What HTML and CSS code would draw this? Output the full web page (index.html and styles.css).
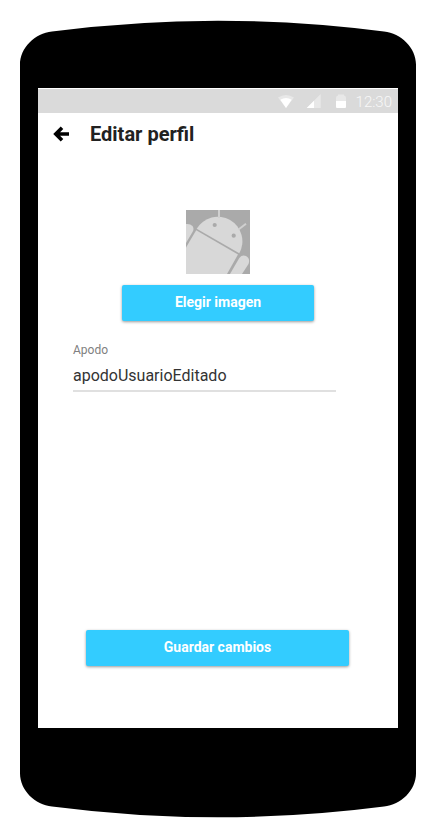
FILE: index.html
```html
<!DOCTYPE html>
<html lang="es">
<head>
<meta charset="utf-8">
<title>Editar perfil</title>
<link rel="stylesheet" href="styles.css">
</head>
<body>
<div class="phone">
  <svg class="phone-body" viewBox="0 0 396 798" aria-hidden="true">
    <path d="M0 44.500C0 28 15 13 32 11.500Q115 .7 198 .7T364 11.500C381 13 396 28 396 44.500V753.500C396 770 381 785 364 786.500Q281 797.300 198 797.300T32 786.500C15 785 0 770 0 753.500Z"/>
  </svg>
  <main class="screen">
    <div class="status-bar">
      <svg class="status-icons" viewBox="0 0 70 16" aria-hidden="true">
        <path fill="#e8e8e8" d="M0 3.500Q8 -1.500 16 3.500L8 14Z"/>
        <path fill="#fff" d="M2.300 5.800Q8 2 13.700 5.800L8 14Z"/>
        <path fill="#e8e8e8" d="M42.700 0V14H28.700Z"/>
        <path fill="#fff" d="M36 6.700V14H28.700Z"/>
        <path fill="#e8e8e8" d="M60 .500H66V1.500Q68 1.500 68 4V7H58V4Q58 1.500 60 1.500Z"/>
        <path fill="#fff" d="M58 7H68V13Q68 14 67 14H59Q58 14 58 13Z"/>
      </svg>
      <span class="clock">12:30</span>
    </div>
    <header class="app-bar">
      <svg class="back" viewBox="0 0 17 16" aria-hidden="true"><path d="M9 1.800 2.800 8 9 14.200M3 8H16"/></svg>
      <h1>Editar perfil</h1>
    </header>
    <svg class="avatar" viewBox="0 0 64 64" role="img">
      <path class="avatar-bg" d="M0 0H64V64H0Z"/>
      <path d="M10.700 18.700A24.600 24.600 0 0 1 53.300 43.300Z"/>
      <path d="M10.200 20.200 52 44.500 41 64H0V37.500Z"/>
      <path d="M0 14Q4 13.400 6.500 16Q8.500 19 6.500 22L0 33Z"/>
      <path d="M53.300 48Q56 44.500 60 46Q64.500 48.500 62.500 54L56 64H44Z"/>
      <path class="antenna" d="M33 0V8M52.500 19.500 60 13.800"/>
      <circle class="eye" cx="28.700" cy="15" r="2.100"/>
      <circle class="eye" cx="47.700" cy="25.700" r="2.100"/>
    </svg>
    <button class="button choose" type="button">Elegir imagen</button>
    <label class="field">
      <span class="field-label">Apodo</span>
      <input class="field-input" type="text" value="apodoUsuarioEditado">
    </label>
    <button class="button save" type="button">Guardar cambios</button>
  </main>
</div>
</body>
</html>
```
FILE: styles.css
```css
* {
  box-sizing: border-box;
}

body {
  margin: 0;
  padding: 20px;
  background: #fff;
  font-family: Roboto, sans-serif;
}

.phone {
  position: relative;
  width: 396px;
  height: 798px;
  padding: 68px 18px 90px;
}

.phone-body {
  position: absolute;
  inset: 0;
  width: 396px;
  height: 798px;
}

.screen {
  position: relative;
  display: flex;
  flex-direction: column;
  height: 640px;
  padding-top: 1px;
  background: #fff;
}

.status-bar {
  display: flex;
  justify-content: flex-end;
  height: 24px;
  padding-right: 6px;
  background: #dadada;
}

.status-icons {
  width: 70px;
  height: 16px;
  margin: 5px 8px 0 0;
}

.clock {
  color: #f8f8f8;
  font-size: 15px;
  font-weight: 300;
  line-height: 26px;
}

.app-bar {
  display: flex;
  align-items: center;
  gap: 20px;
  height: 42px;
  padding-left: 15px;
}

.back {
  width: 17px;
  height: 16px;
  fill: none;
  stroke: #000;
  stroke-width: 3.6;
}

h1 {
  margin: 0;
  color: #212121;
  font-size: 20px;
  font-weight: 700;
  line-height: 24px;
}

.avatar {
  align-self: center;
  width: 64px;
  height: 64px;
  margin-top: 55px;
  fill: #d8d8d8;
}

.avatar-bg,
.eye {
  fill: #aaa;
}

.antenna {
  fill: none;
  stroke: #d0d0d0;
  stroke-width: 2;
}

.button {
  height: 36px;
  padding: 0 0 2px;
  border: 0;
  border-radius: 2px;
  background: #3cf;
  box-shadow: 0 1px 3px rgba(0, 0, 0, .4);
  color: #fff;
  font: 700 14px/20px Roboto, sans-serif;
}

.choose {
  width: 192px;
  margin: 11px 0 0 84px;
}

.field {
  display: flex;
  flex-direction: column;
  width: 263px;
  margin: 21px 0 0 35px;
}

.field-label {
  color: #808080;
  font-size: 12px;
  line-height: 16px;
}

.field-input {
  height: 34px;
  padding: 2px 0 0;
  border: 0;
  border-bottom: 2px solid #e0e0e0;
  outline: 0;
  background: none;
  color: #333;
  font: 16px/20px Roboto, sans-serif;
}

.save {
  width: 263px;
  margin: auto 0 62px 48px;
}
```
